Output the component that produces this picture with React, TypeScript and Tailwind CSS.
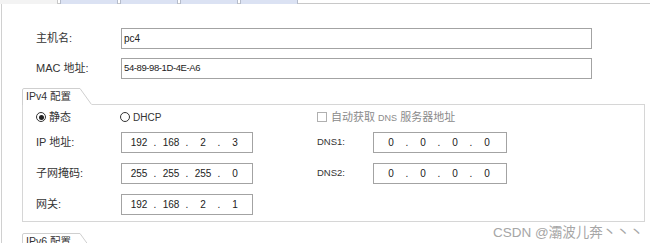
import React from 'react';

const FONT = { fontFamily: '"Liberation Sans", "Noto Sans CJK SC", sans-serif' };

const IpField: React.FC<{ parts: string[]; width: string }> = ({ parts, width }) => (
  <div className={`${width} h-[21px] border border-[#a3a3a3] bg-white flex items-center pl-[7px] text-[10px] text-[#222]`}>
    {parts.map((p, i) => (
      <React.Fragment key={i}>
        <span className="w-[20px] text-center">{p}</span>
        {i < 3 && <span className="w-[12px] text-center">.</span>}
      </React.Fragment>
    ))}
  </div>
);

const GroupTab: React.FC<{ label: string }> = ({ label }) => (
  <div className="relative w-[70px] h-[17px] shrink-0">
    <svg className="absolute inset-0" width="70" height="17" viewBox="0 0 70 17">
      <path d="M0.5 17 V2 Q0.5 0.5 2 0.5 H58 L69.5 16.5" fill="none" stroke="#cfcfcf" />
    </svg>
    <div className="relative pl-[4px] pt-[1px] text-[10.5px] leading-[14px] text-[#333]">{label}</div>
  </div>
);

const Radio: React.FC<{ checked?: boolean }> = ({ checked }) => (
  <span className="w-[10px] h-[10px] rounded-full border border-[#333] flex items-center justify-center shrink-0">
    {checked && <span className="w-[5px] h-[5px] rounded-full bg-[#222]" />}
  </span>
);

export default function App() {
  return (
    <div className="w-[650px] h-[243px] relative overflow-hidden bg-white" style={FONT}>
      {/* tab strip */}
      <div className="flex h-[4px]">
        <div className="w-[58px] bg-[#f3f3f3] border-r border-[#c8c8c8]" />
        <div className="w-[2px] border-b border-[#c8c8c8]" />
        <div className="w-[58px] bg-[#dbe2f3] border-x border-[#b5bccb]" />
        <div className="w-[2px] border-b border-[#c8c8c8]" />
        <div className="w-[58px] bg-[#dbe2f3] border-x border-[#b5bccb]" />
        <div className="w-[2px] border-b border-[#c8c8c8]" />
        <div className="w-[58px] bg-[#dbe2f3] border-x border-[#b5bccb]" />
        <div className="w-[2px] border-b border-[#c8c8c8]" />
        <div className="w-[58px] bg-[#dbe2f3] border-x border-[#b5bccb]" />
        <div className="flex-1 border-b border-[#c8c8c8]" />
      </div>

      <div className="ml-[1px] border-l border-[#d0d0d0] h-[239px]">
        <div className="pt-[24px] pl-[34px]">
          <div className="flex items-center">
            <span className="w-[85px] text-[11px] text-[#333]">主机名:</span>
            <div className="w-[471px] h-[21px] border border-[#a3a3a3] flex items-center pl-[2px] text-[10px] text-[#222]">pc4</div>
          </div>
          <div className="flex items-center mt-[9px]">
            <span className="w-[85px] text-[11px] text-[#333]">MAC 地址:</span>
            <div className="w-[471px] h-[21px] border border-[#a3a3a3] flex items-center pl-[2px] text-[9.5px] text-[#222] tracking-[-0.4px]">54-89-98-1D-4E-A6</div>
          </div>
        </div>

        {/* IPv4 group */}
        <div className="ml-[20px] w-[623px] mt-[9px]">
          <div className="flex">
            <GroupTab label="IPv4 配置" />
            <div className="flex-1 border-b border-[#d6d6d6]" />
          </div>
          <div className="border-x border-b border-[#d6d6d6] pt-[2px] pb-[6px] text-[11px] text-[#333]">
            <div className="flex items-center h-[20px]">
              <div className="w-[294px] pl-[13px] flex items-center">
                <div className="w-[84px] flex items-center gap-[3px]">
                  <Radio checked />
                  <span>静态</span>
                </div>
                <div className="flex items-center gap-[3px]">
                  <Radio />
                  <span className="text-[10px]">DHCP</span>
                </div>
              </div>
              <div className="flex items-center gap-[4px] text-[#8a8a8a]">
                <span className="w-[10px] h-[10px] border border-[#b0b0b0] bg-white" />
                <span>自动获取 <span className="text-[9px]">DNS</span> 服务器地址</span>
              </div>
            </div>

            <div className="flex items-center h-[21px] mt-[5px]">
              <div className="w-[294px] pl-[13px] flex items-center">
                <span className="w-[85px]">IP 地址:</span>
                <IpField parts={['192', '168', '2', '3']} width="w-[132px]" />
              </div>
              <span className="w-[56px] text-[9.5px]">DNS1:</span>
              <IpField parts={['0', '0', '0', '0']} width="w-[134px]" />
            </div>

            <div className="flex items-center h-[21px] mt-[10px]">
              <div className="w-[294px] pl-[13px] flex items-center">
                <span className="w-[85px]">子网掩码:</span>
                <IpField parts={['255', '255', '255', '0']} width="w-[132px]" />
              </div>
              <span className="w-[56px] text-[9.5px]">DNS2:</span>
              <IpField parts={['0', '0', '0', '0']} width="w-[134px]" />
            </div>

            <div className="flex items-center h-[21px] mt-[10px]">
              <div className="w-[294px] pl-[13px] flex items-center">
                <span className="w-[85px]">网关:</span>
                <IpField parts={['192', '168', '2', '1']} width="w-[132px]" />
              </div>
            </div>
          </div>
        </div>

        {/* IPv6 group (cut off at the bottom edge, as in the window) */}
        <div className="ml-[20px] w-[623px] mt-[11px] flex">
          <GroupTab label="IPv6 配置" />
        </div>
      </div>

      {/* watermark */}
      <div className="absolute left-[493px] top-[224px] text-[13.5px] leading-[18px] text-[#a6a6a6] whitespace-nowrap">
        CSDN @灞波儿奔丶丶丶
      </div>
    </div>
  );
}
